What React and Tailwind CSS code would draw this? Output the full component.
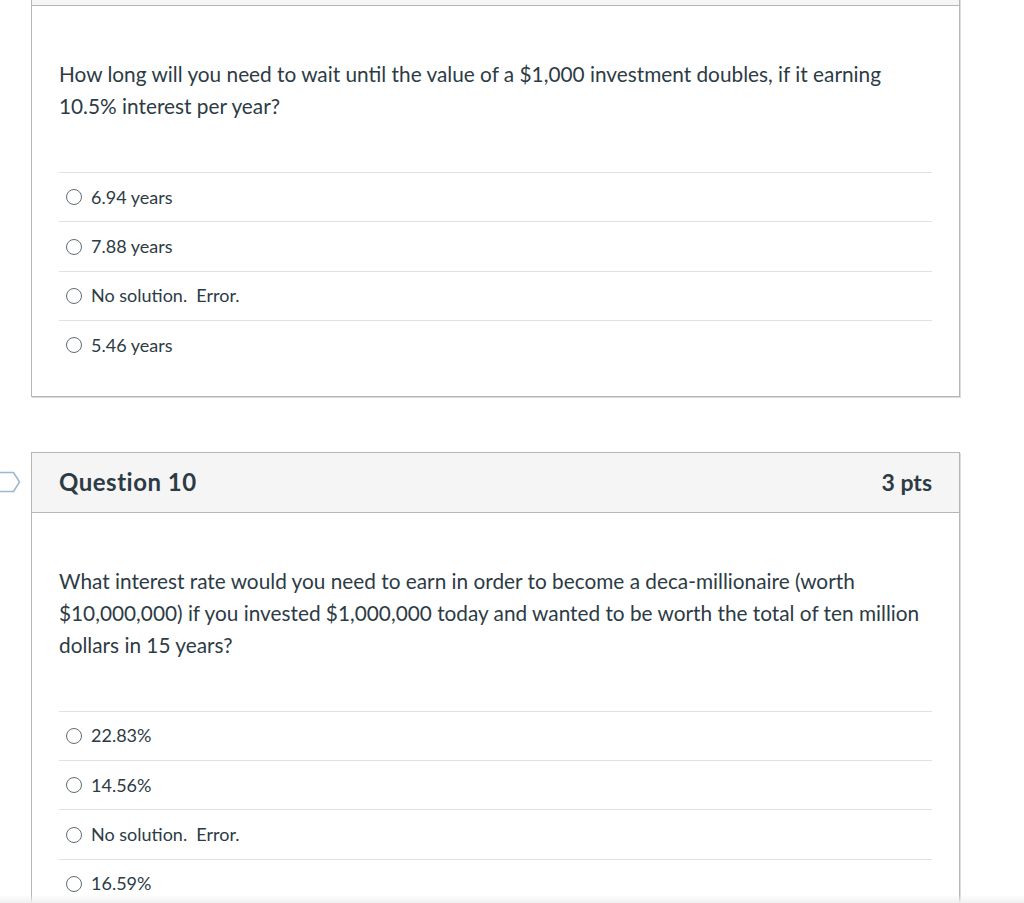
import React from "react";

const questions = [
  {
    title: "",
    pts: "",
    text: "How long will you need to wait until the value of a $1,000 investment doubles, if it earning 10.5% interest per year?",
    answers: ["6.94 years", "7.88 years", "No solution.  Error.", "5.46 years"],
  },
  {
    title: "Question 10",
    pts: "3 pts",
    flagged: true,
    text: "What interest rate would you need to earn in order to become a deca-millionaire (worth $10,000,000) if you invested $1,000,000 today and wanted to be worth the total of ten million dollars in 15 years?",
    answers: ["22.83%", "14.56%", "No solution.  Error.", "16.59%"],
  },
];

function Flag() {
  return (
    <svg width="22" height="24" viewBox="0 0 22 24" className="block">
      <path
        d="M-4 2.5 H13.5 L19.5 12 L13.5 21.5 H-4"
        fill="none"
        stroke="#9bb7cd"
        strokeWidth="1.5"
        strokeLinejoin="round"
      />
    </svg>
  );
}

function Question({ q }) {
  return (
    <div className="flex">
      <div className="w-[31px] h-[61px] flex items-center">
        {q.flagged && <Flag />}
      </div>
      <div className="w-[929px] border border-[#b6b6b6] shadow-[1px_1px_0_#dcdcdc] bg-white">
        <div className="h-[60px] bg-[#f5f5f5] border-b border-[#b6b6b6] px-[27px] flex items-center justify-between">
          <h2 className="text-[24px] font-bold text-[#2d3b45] tracking-[0.5px]">{q.title}</h2>
          <span className="text-[23px] font-bold text-[#2d3b45]">{q.pts}</span>
        </div>
        <div className="px-[27px] pt-[52px] pb-[26px]">
          <p className="text-[20.8px] leading-[32px] text-[#2d3b45] pr-[8px]">{q.text}</p>
          <div className="mt-[50px]">
            {q.answers.map((a) => (
              <div
                key={a}
                className="h-[49.4px] border-t border-[#dfe2e4] flex items-center pl-[7px]"
              >
                <span className="w-[16px] h-[16px] rounded-full border border-[#5f6b73] bg-white shrink-0" />
                <span className="ml-[9px] text-[18px] text-[#2d3b45] whitespace-pre">{a}</span>
              </div>
            ))}
          </div>
        </div>
      </div>
    </div>
  );
}

export default function App() {
  return (
    <div
      className="relative min-h-[903px] bg-white overflow-hidden"
      style={{ fontFamily: "Lato, 'Open Sans', sans-serif" }}
    >
      <div className="-mt-[55px] flex flex-col gap-[55px]">
        {questions.map((q, i) => (
          <Question key={i} q={q} />
        ))}
      </div>
      <div className="fixed left-0 right-0 bottom-0 h-[8px] bg-gradient-to-b from-white/0 to-[#f0f0f0]" />
    </div>
  );
}
